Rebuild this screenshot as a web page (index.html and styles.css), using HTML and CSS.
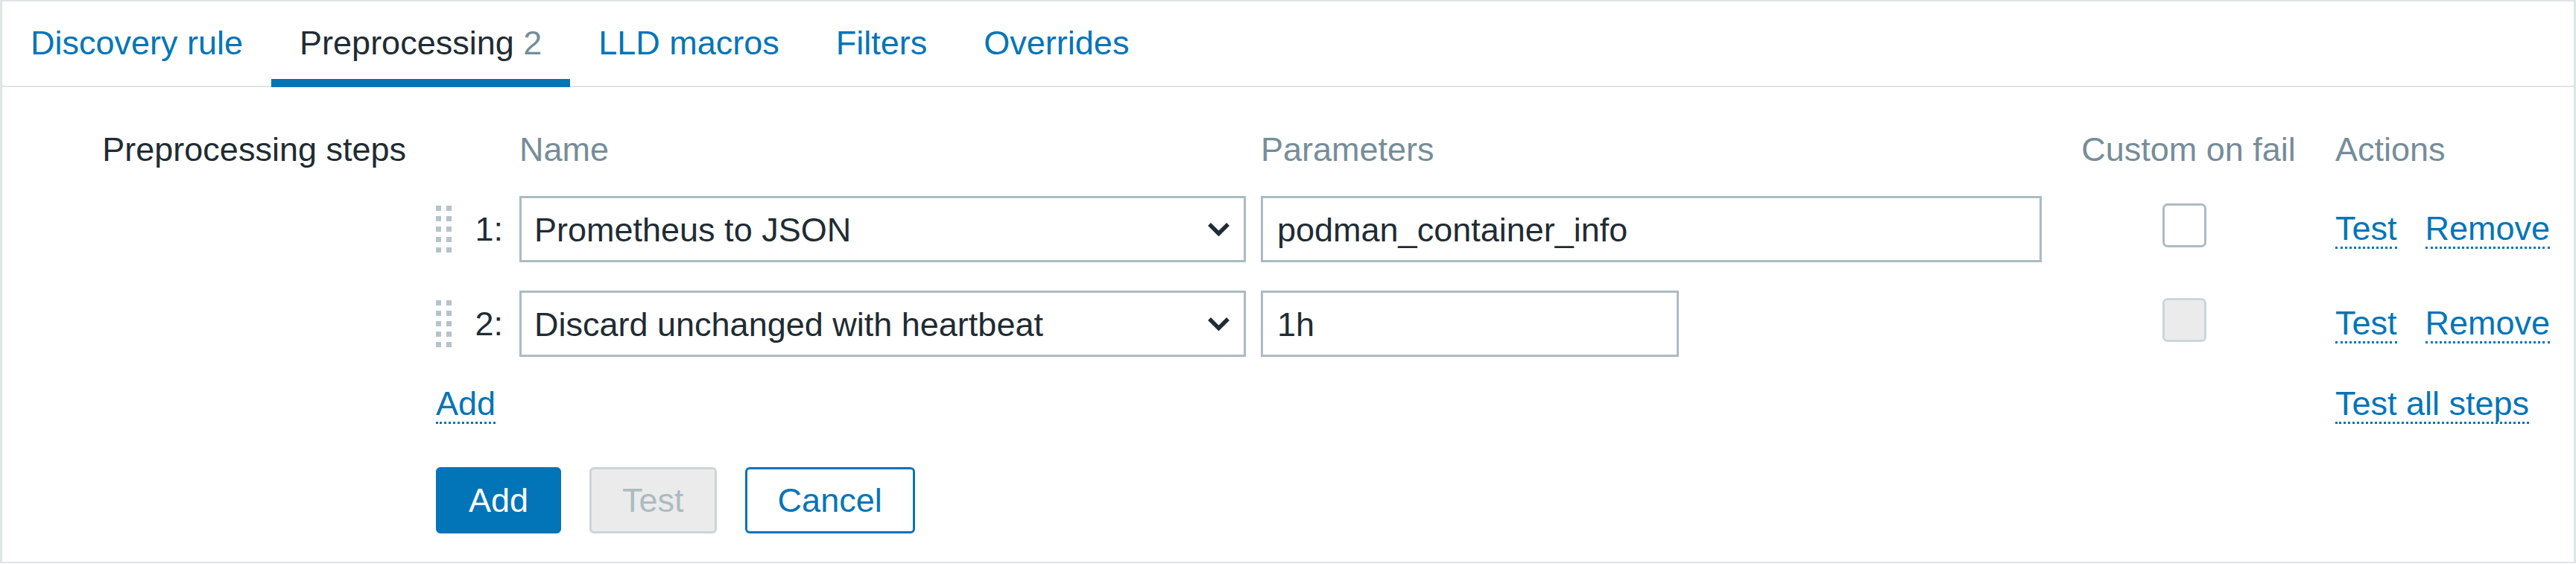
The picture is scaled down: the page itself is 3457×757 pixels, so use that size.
FILE: index.html
```html
<!DOCTYPE html>
<html lang="en">
<head>
<meta charset="utf-8">
<title>Preprocessing</title>
<link rel="stylesheet" href="styles.css">
</head>
<body>
<div class="panel">
  <ul class="tabs">
    <li><a class="tab">Discovery rule</a></li>
    <li><a class="tab active">Preprocessing <span class="count">2</span></a></li>
    <li><a class="tab">LLD macros</a></li>
    <li><a class="tab">Filters</a></li>
    <li><a class="tab">Overrides</a></li>
  </ul>
  <div class="form">
    <div class="form-row">
      <div class="form-label">Preprocessing steps</div>
      <div class="steps">
        <div></div>
        <div></div>
        <div class="th">Name</div>
        <div class="th">Parameters</div>
        <div class="th center">Custom on fail</div>
        <div class="th">Actions</div>

        <div class="handle"><svg width="21" height="63" viewBox="0 0 21 63"><g fill="#b5c3ca"><rect x="0" y="0" width="7" height="7"/><rect x="14" y="0" width="7" height="7"/><rect x="0" y="14" width="7" height="7"/><rect x="14" y="14" width="7" height="7"/><rect x="0" y="28" width="7" height="7"/><rect x="14" y="28" width="7" height="7"/><rect x="0" y="42" width="7" height="7"/><rect x="14" y="42" width="7" height="7"/><rect x="0" y="56" width="7" height="7"/><rect x="14" y="56" width="7" height="7"/></g></svg></div>
        <div class="num">1:</div>
        <div class="select"><span>Prometheus to JSON</span><svg class="chev" width="31" height="19" viewBox="0 0 31 19"><path d="M3 3L15.5 15.5L28 3" fill="none" stroke="#1f2c33" stroke-width="5.5"/></svg></div>
        <div class="param"><input class="text-input wide" type="text" value="podman_container_info"></div>
        <div class="cb-cell"><span class="checkbox"></span></div>
        <div class="actions"><a class="link">Test</a><a class="link">Remove</a></div>

        <div class="handle"><svg width="21" height="63" viewBox="0 0 21 63"><g fill="#b5c3ca"><rect x="0" y="0" width="7" height="7"/><rect x="14" y="0" width="7" height="7"/><rect x="0" y="14" width="7" height="7"/><rect x="14" y="14" width="7" height="7"/><rect x="0" y="28" width="7" height="7"/><rect x="14" y="28" width="7" height="7"/><rect x="0" y="42" width="7" height="7"/><rect x="14" y="42" width="7" height="7"/><rect x="0" y="56" width="7" height="7"/><rect x="14" y="56" width="7" height="7"/></g></svg></div>
        <div class="num">2:</div>
        <div class="select"><span>Discard unchanged with heartbeat</span><svg class="chev" width="31" height="19" viewBox="0 0 31 19"><path d="M3 3L15.5 15.5L28 3" fill="none" stroke="#1f2c33" stroke-width="5.5"/></svg></div>
        <div class="param"><input class="text-input short" type="text" value="1h"></div>
        <div class="cb-cell"><span class="checkbox disabled"></span></div>
        <div class="actions"><a class="link">Test</a><a class="link">Remove</a></div>

        <div class="add-cell"><a class="link">Add</a></div>
        <div class="actions"><a class="link">Test all steps</a></div>
      </div>
    </div>
    <div class="form-row buttons-row">
      <div></div>
      <div class="buttons">
        <button class="btn primary" type="button">Add</button>
        <button class="btn disabled" type="button">Test</button>
        <button class="btn alt" type="button">Cancel</button>
      </div>
    </div>
  </div>
</div>
</body>
</html>
```

FILE: styles.css
```css
html, body {
  margin: 0;
  padding: 0;
  background: #ffffff;
}

body {
  font-family: "Liberation Sans", Arial, sans-serif;
  font-size: 45px;
  line-height: 49px;
  color: #1f2c33;
}

.panel {
  border-style: solid;
  border-color: #dfe4e7;
  border-width: 2px 3px 2px 3px;
  background: #ffffff;
}

/* Tabs */
.tabs {
  display: flex;
  margin: 0;
  padding: 0;
  list-style: none;
  border-bottom: 2px solid #dfe4e7;
}

.tab {
  display: block;
  padding: 31px 38px 24px;
  border-bottom: 11px solid transparent;
  margin-bottom: -2px;
  color: #0275b8;
  white-space: nowrap;
}

.tab.active {
  color: #1f2c33;
  border-bottom-color: #0275b8;
}

.count {
  color: #768d99;
}

/* Form */
.form {
  padding: 59px 0 38px;
}

.form-row {
  display: grid;
  grid-template-columns: 542px 1fr;
  column-gap: 40px;
  align-items: start;
}

.form-label {
  text-align: right;
  white-space: nowrap;
}

.steps {
  display: grid;
  grid-template-columns: 22px 50px 975px 1048px 354px auto;
  column-gap: 20px;
  row-gap: 38px;
  align-items: center;
}

.th {
  color: #768d99;
  white-space: nowrap;
}

.th.center {
  text-align: center;
}

.handle {
  display: flex;
  align-items: center;
  justify-content: flex-start;
}

.handle svg {
  display: block;
}

.num {
  text-align: right;
  padding-right: 2px;
}

.select {
  box-sizing: border-box;
  height: 89px;
  border: 3px solid #acbbc2;
  background: #ffffff;
  display: flex;
  align-items: center;
  justify-content: space-between;
  padding: 2px 18px 0 17px;
  white-space: nowrap;
}

.chev {
  display: block;
  margin-top: -2px;
}

.param {
  display: flex;
}

.text-input {
  box-sizing: border-box;
  height: 89px;
  border: 3px solid #acbbc2;
  border-radius: 0;
  background: #ffffff;
  font: inherit;
  color: #1f2c33;
  padding: 2px 19px 0;
  margin: 0;
  outline: none;
}

.text-input.wide {
  width: 1048px;
}

.text-input.short {
  width: 561px;
}

.cb-cell {
  display: flex;
  justify-content: center;
  padding-right: 12px;
}

.checkbox {
  box-sizing: border-box;
  display: block;
  width: 59px;
  height: 59px;
  border: 3px solid #acbbc2;
  border-radius: 7px;
  background: #ffffff;
  margin-bottom: 10px;
}

.checkbox.disabled {
  background: #ebebeb;
  border-color: #ccd5d9;
}

.actions {
  display: flex;
  gap: 38px;
  white-space: nowrap;
}

.link {
  display: inline-block;
  color: #0275b8;
  border-bottom: 3px dotted #0275b8;
  line-height: 49px;
  cursor: pointer;
}

.add-cell {
  grid-column: 1 / span 5;
}

/* Buttons */
.buttons-row {
  margin-top: 58px;
}

.buttons {
  display: flex;
  gap: 38px;
}

.btn {
  box-sizing: border-box;
  height: 89px;
  padding: 0 41px;
  border: 3px solid #0275b8;
  border-radius: 6px;
  font: inherit;
  line-height: 49px;
  background: #ffffff;
  color: #0275b8;
  margin: 0;
}

.btn.primary {
  background: #0275b8;
  color: #ffffff;
}

.btn.disabled {
  background: #ebebeb;
  border-color: #ccd5d9;
  color: #acbbc2;
}

.btn.alt {
  background: #ffffff;
  color: #0275b8;
}
```
